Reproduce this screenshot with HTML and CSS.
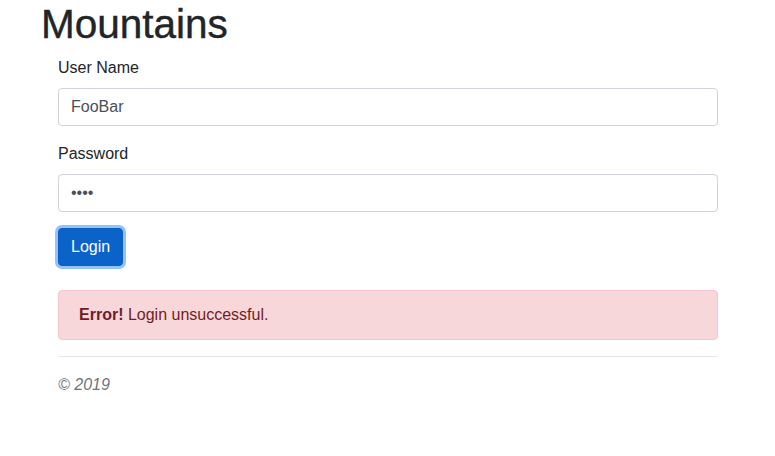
FILE: index.html
```html
<!DOCTYPE html>
<html lang="en">
<head>
<meta charset="utf-8">
<title>Mountains</title>
<link rel="stylesheet" href="styles.css">
</head>
<body>
<header class="page-header">
  <h1 class="title">Mountains</h1>
</header>
<main class="content">
  <form class="login-form">
    <div class="form-group">
      <label class="form-label" for="user">User Name</label>
      <input class="form-control" id="user" type="text" value="FooBar">
    </div>
    <div class="form-group">
      <label class="form-label" for="pass">Password</label>
      <input class="form-control" id="pass" type="password" value="abcd">
    </div>
    <button class="btn btn-primary" type="button">Login</button>
  </form>
  <div class="alert alert-danger"><strong>Error!</strong> Login unsuccessful.</div>
  <hr class="divider">
  <footer class="footer"><em>© 2019</em></footer>
</main>
</body>
</html>
```

FILE: styles.css
```css
* { box-sizing: border-box; }
html, body {
  margin: 0;
  padding: 0;
  background: #fff;
}
body {
  font-family: "Liberation Sans", Arial, sans-serif;
  font-size: 16px;
  line-height: 24px;
  color: #212529;
}
.page-header {
  padding-left: 41px;
}
.title {
  margin: 0 0 8px 0;
  font-size: 40.5px;
  line-height: 48px;
  font-weight: 500;
  -webkit-text-stroke: 0.4px #212529;
}
.content {
  padding: 0 57px 0 58px;
}
.login-form {
  margin: 0 0 24px 0;
}
.form-group {
  margin-bottom: 16px;
  display: flex;
  flex-direction: column;
}
.form-label {
  display: block;
  margin-bottom: 8px;
}
.form-control {
  display: block;
  width: 100%;
  height: 38px;
  padding: 6px 12px;
  font-family: inherit;
  font-size: 16px;
  line-height: 24px;
  color: #495057;
  background: #fff;
  border: 1px solid #ced4da;
  border-radius: 4px;
  outline: none;
}
.btn {
  display: inline-block;
  height: 38px;
  padding: 6px 12px;
  font-family: inherit;
  font-size: 16px;
  line-height: 24px;
  border-radius: 4px;
  cursor: pointer;
}
.btn-primary {
  color: #fff;
  background: #0b62c9;
  border: 1px solid #0b5fc4;
  box-shadow: 0 0 0 3px rgba(110, 175, 250, 0.75);
}
.alert {
  padding: 12px 20px;
  border: 1px solid #f5c6cb;
  border-radius: 4px;
  margin-bottom: 16px;
}
.alert-danger {
  color: #721c24;
  background: #f8d7da;
}
.alert strong { font-weight: 700; }
.divider {
  margin: 0 0 16px 0;
  border: 0;
  border-top: 1px solid rgba(0, 0, 0, 0.1);
}
.footer {
  color: #6c757d;
}
```
